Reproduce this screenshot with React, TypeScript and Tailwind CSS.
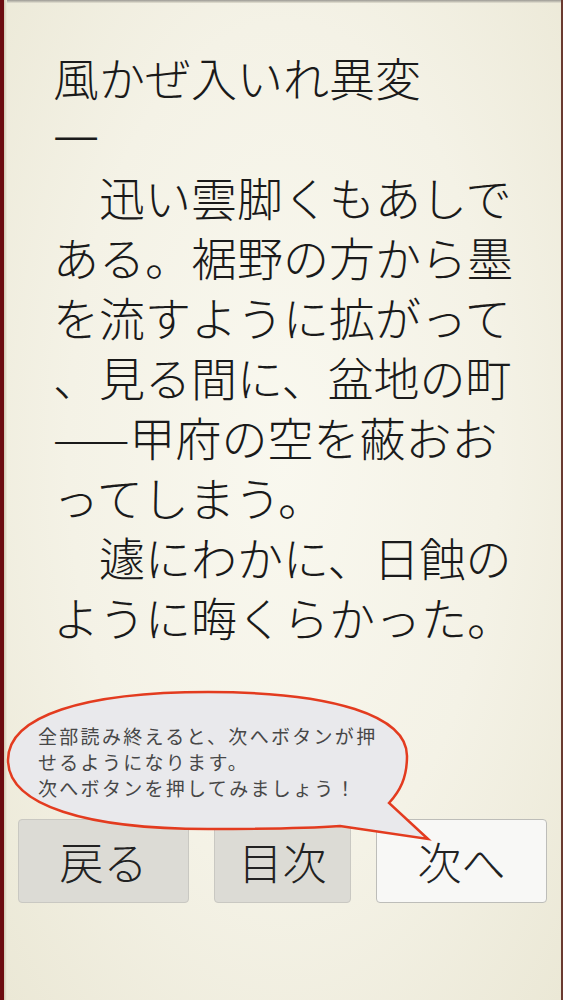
import React from "react";

const jp = {
  fontFamily: '"Noto Sans CJK JP", "Noto Sans", sans-serif',
};

const lines: string[] = [
  "風かぜ入いれ異変",
  "一",
  "　迅い雲脚くもあしで",
  "ある。裾野の方から墨",
  "を流すように拡がって",
  "、見る間に、盆地の町",
  "——甲府の空を蔽おお",
  "ってしまう。",
  "　遽にわかに、日蝕の",
  "ように晦くらかった。",
];

function NavButton({ label, width, light }: { label: string; width: string; light?: boolean }) {
  return (
    <button
      className={
        light
          ? `${width} h-[84px] rounded-[4px] border border-[#bdbdb9] bg-[#f8f8f6] text-[44px] font-light leading-none text-[#222222] flex items-center justify-center`
          : `${width} h-[84px] rounded-[4px] border border-[#c9c8c2] bg-[#dcdbd5] text-[44px] font-light leading-none text-[#222222] flex items-center justify-center`
      }
      style={jp}
    >
      {label}
    </button>
  );
}

export default function App() {
  return (
    <div className="relative w-[563px] h-[1000px] flex overflow-hidden bg-[#f2f0e2]" style={jp}>
      {/* book spine on the left */}
      <div className="w-[4px] h-full bg-[#6c0b10]" />
      <div className="w-[3px] h-full bg-gradient-to-r from-[#cfc6b0] to-[#efebdc]" />

      {/* page */}
      <div className="relative flex-1 h-full flex flex-col bg-[radial-gradient(ellipse_at_50%_45%,#f9f8ef_0%,#f4f2e6_55%,#ebe8d6_100%)]">
        <div className="h-[3px] w-full bg-gradient-to-b from-[#9c9a94] to-[#e6e3d4]" />
        <div className="pl-[46px] pt-[43px] text-[46px] font-light leading-[60px] text-[#1a1a1a]">
          {lines.map((l, i) => (
            <div key={i} className="whitespace-pre h-[60px]">
              {l}
            </div>
          ))}
        </div>

        <div className="mt-[173px] pl-[11px] flex gap-[25px]">
          <NavButton label="戻る" width="w-[171px]" />
          <NavButton label="目次" width="w-[137px]" />
          <NavButton label="次へ" width="w-[171px]" light />
        </div>
      </div>

      {/* right page edge */}
      <div className="w-[2px] h-full bg-[#6a3a30]" />

      {/* hint balloon */}
      <svg
        className="absolute left-0 top-[680px]"
        width="450"
        height="170"
        viewBox="0 0 450 170"
      >
        <path
          d="M 208 12 C 334 12 407 36 407 76 C 407 98 400 111 389 123 L 428 159 L 340 146 C 300 149 250 149 208 149 C 88 149 8 126 8 80 C 8 36 84 12 208 12 Z"
          fill="#e9e9ec"
          stroke="#e33b1f"
          strokeWidth="2.5"
          strokeLinejoin="miter"
        />
      </svg>
      <div className="absolute left-[38px] top-[723px] text-[19px] leading-[26px] tracking-[2.3px] text-[#474747]">
        <div className="h-[26px] whitespace-nowrap">全部読み終えると、次へボタンが押</div>
        <div className="h-[26px] whitespace-nowrap">せるようになります。</div>
        <div className="h-[26px] whitespace-nowrap">次へボタンを押してみましょう！</div>
      </div>
    </div>
  );
}
